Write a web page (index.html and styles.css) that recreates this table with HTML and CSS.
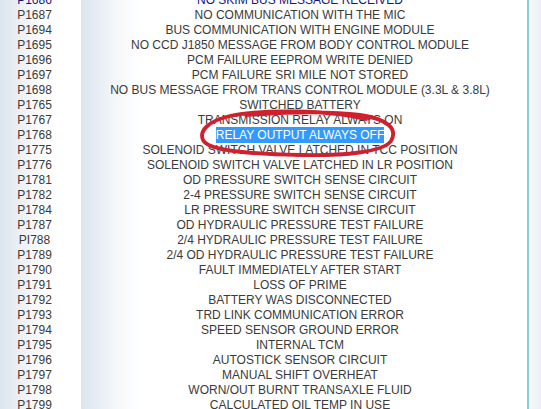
FILE: index.html
```html
<!DOCTYPE html>
<html>
<head>
<meta charset="utf-8">
<link rel="stylesheet" href="styles.css">
</head>
<body>
<div class="page">
  <div class="codes-table">
    <div class="row visited"><div class="code">P1686</div><div class="desc">NO SKIM BUS MESSAGE RECEIVED</div></div>
    <div class="row"><div class="code">P1687</div><div class="desc">NO COMMUNICATION WITH THE MIC</div></div>
    <div class="row"><div class="code">P1694</div><div class="desc">BUS COMMUNICATION WITH ENGINE MODULE</div></div>
    <div class="row"><div class="code">P1695</div><div class="desc">NO CCD J1850 MESSAGE FROM BODY CONTROL MODULE</div></div>
    <div class="row"><div class="code">P1696</div><div class="desc">PCM FAILURE EEPROM WRITE DENIED</div></div>
    <div class="row"><div class="code">P1697</div><div class="desc">PCM FAILURE SRI MILE NOT STORED</div></div>
    <div class="row"><div class="code">P1698</div><div class="desc">NO BUS MESSAGE FROM TRANS CONTROL MODULE (3.3L &amp; 3.8L)</div></div>
    <div class="row"><div class="code">P1765</div><div class="desc">SWITCHED BATTERY</div></div>
    <div class="row"><div class="code">P1767</div><div class="desc">TRANSMISSION RELAY ALWAYS ON</div></div>
    <div class="row"><div class="code">P1768</div><div class="desc"><span class="selected">RELAY OUTPUT ALWAYS OFF</span></div></div>
    <div class="row"><div class="code">P1775</div><div class="desc">SOLENOID SWITCH VALVE LATCHED IN TCC POSITION</div></div>
    <div class="row"><div class="code">P1776</div><div class="desc">SOLENOID SWITCH VALVE LATCHED IN LR POSITION</div></div>
    <div class="row"><div class="code">P1781</div><div class="desc">OD PRESSURE SWITCH SENSE CIRCUIT</div></div>
    <div class="row"><div class="code">P1782</div><div class="desc">2-4 PRESSURE SWITCH SENSE CIRCUIT</div></div>
    <div class="row"><div class="code">P1784</div><div class="desc">LR PRESSURE SWITCH SENSE CIRCUIT</div></div>
    <div class="row"><div class="code">P1787</div><div class="desc">OD HYDRAULIC PRESSURE TEST FAILURE</div></div>
    <div class="row"><div class="code">PI788</div><div class="desc">2/4 HYDRAULIC PRESSURE TEST FAILURE</div></div>
    <div class="row"><div class="code">P1789</div><div class="desc">2/4 OD HYDRAULIC PRESSURE TEST FAILURE</div></div>
    <div class="row"><div class="code">P1790</div><div class="desc">FAULT IMMEDIATELY AFTER START</div></div>
    <div class="row"><div class="code">P1791</div><div class="desc">LOSS OF PRIME</div></div>
    <div class="row"><div class="code">P1792</div><div class="desc">BATTERY WAS DISCONNECTED</div></div>
    <div class="row"><div class="code">P1793</div><div class="desc">TRD LINK COMMUNICATION ERROR</div></div>
    <div class="row"><div class="code">P1794</div><div class="desc">SPEED SENSOR GROUND ERROR</div></div>
    <div class="row"><div class="code">P1795</div><div class="desc">INTERNAL TCM</div></div>
    <div class="row"><div class="code">P1796</div><div class="desc">AUTOSTICK SENSOR CIRCUIT</div></div>
    <div class="row"><div class="code">P1797</div><div class="desc">MANUAL SHIFT OVERHEAT</div></div>
    <div class="row"><div class="code">P1798</div><div class="desc">WORN/OUT BURNT TRANSAXLE FLUID</div></div>
    <div class="row"><div class="code">P1799</div><div class="desc">CALCULATED OIL TEMP IN USE</div></div>
  </div>
  <div class="edge"></div>
  <svg class="scribble" width="541" height="409" viewBox="0 0 541 409">
    <path d="M366 119 C330 110 262 109 230 116 C208 121 199 131 203 140 C208 151 250 154 300 155 C345 156 383 152 391 141 C398 129 388 119 360 115 C330 111 290 112 246 115" fill="none" stroke="#d01f2d" stroke-width="3.8" stroke-linecap="round"/>
  </svg>
</div>
</body>
</html>
```

FILE: styles.css
```css
html, body {
  margin: 0;
  padding: 0;
  background: #ffffff;
  overflow: hidden;
}

.page {
  position: relative;
  display: flex;
  width: 541px;
  height: 409px;
  overflow: hidden;
  font-family: "Liberation Sans", Arial, sans-serif;
  font-size: 12px;
  color: #3a3a3a;
}

.codes-table {
  width: 527px;
  flex: none;
  margin-top: -7px;
  background: linear-gradient(to right,
    #dce5ee 0px, #ffffff 46px, #ffffff 81px,
    #dbe4ed 81px, #f4f7fa 115px, #ffffff 140px, #ffffff 527px);
  align-self: stretch;
}

.row {
  display: grid;
  grid-template-columns: 81px 438px;
  height: 15px;
  line-height: 15px;
  white-space: nowrap;
}

.code {
  padding-right: 12px;
  text-align: center;
}

.desc {
  text-align: center;
}

.visited {
  color: #16167e;
}

.selected {
  background: #3399ff;
  color: #ffffff;
  padding: 1px 0;
}

.edge {
  flex: 1;
  border-left: 2px solid #86cfd9;
  background: linear-gradient(to right, #f7f8fb 0, #eceff6 100%);
}

.scribble {
  position: absolute;
  left: 0;
  top: 0;
  pointer-events: none;
}
```
